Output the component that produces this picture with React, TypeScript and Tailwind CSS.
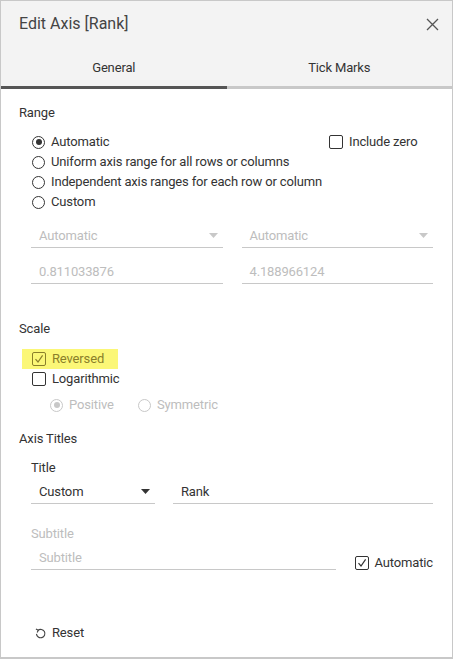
import React from 'react';

const Radio = ({ checked, disabled }: { checked?: boolean; disabled?: boolean }) => (
  <span
    className={`flex h-[13px] w-[13px] shrink-0 items-center justify-center rounded-full border ${
      disabled ? 'border-[#c8c8c8]' : 'border-[#333]'
    }`}
  >
    {checked && <span className={`h-[6px] w-[6px] rounded-full ${disabled ? 'bg-[#c8c8c8]' : 'bg-[#333]'}`} />}
  </span>
);

const Check = ({ checked, color = '#333' }: { checked?: boolean; color?: string }) => (
  <span
    className="flex h-[14px] w-[14px] shrink-0 items-center justify-center rounded-[2px] border"
    style={{ borderColor: color }}
  >
    {checked && (
      <svg width="10" height="10" viewBox="0 0 10 10" fill="none">
        <path d="M1.5 5.2 L4 8 L8.6 1.4" stroke={color} strokeWidth="1.2" />
      </svg>
    )}
  </span>
);

const Caret = ({ color }: { color: string }) => (
  <svg width="9" height="5" viewBox="0 0 9 5">
    <path d="M0 0 H9 L4.5 5 Z" fill={color} />
  </svg>
);

const Dropdown = ({ value, disabled, className }: { value: string; disabled?: boolean; className: string }) => (
  <div className={`flex h-[24px] items-center justify-between border-b border-[#c8c8c8] pl-[8px] pr-[5px] ${className}`}>
    <span className={disabled ? 'text-[#bdbdbd]' : 'text-[#333]'}>{value}</span>
    <Caret color={disabled ? '#c8c8c8' : '#333'} />
  </div>
);

const Field = ({ value, muted, className }: { value: string; muted?: boolean; className: string }) => (
  <div className={`flex h-[24px] items-center border-b border-[#c8c8c8] pl-[8px] ${className}`}>
    <span className={muted ? 'text-[#bdbdbd]' : 'text-[#333]'}>{value}</span>
  </div>
);

export default function App() {
  const radios = [
    'Automatic',
    'Uniform axis range for all rows or columns',
    'Independent axis ranges for each row or column',
    'Custom',
  ];

  return (
    <div
      className="flex h-[659px] w-[453px] flex-col overflow-hidden bg-white text-[13px] leading-[16px] tracking-[-0.15px] text-[#333]"
      style={{ fontFamily: 'Roboto, "Liberation Sans", sans-serif' }}
    >
      <div className="flex flex-1 flex-col border-x border-t border-[#c8c8c8] border-b-2">
        {/* Header */}
        <div className="bg-[#f3f3f3]">
          <div className="flex h-[46px] items-center justify-between pl-[18px] pr-[13px]">
            <span className="text-[16px] tracking-normal text-[#444]">Edit Axis [Rank]</span>
            <svg width="13" height="13" viewBox="0 0 13 13" fill="none">
              <path d="M1 1 L12 12 M12 1 L1 12" stroke="#555" strokeWidth="1.3" />
            </svg>
          </div>
          <div className="flex h-[39px]">
            <div className="flex flex-1 justify-center pt-[13px]">General</div>
            <div className="flex flex-1 justify-center pt-[13px]">Tick Marks</div>
          </div>
          <div className="flex h-[3px]">
            <div className="flex-1 bg-[#555]" />
            <div className="flex-1 bg-[#c8c8c8]" />
          </div>
        </div>

        {/* Body */}
        <div className="flex flex-1 flex-col pl-[18px] pr-[19px] pt-[16px]">
          <div>Range</div>
          <div className="mt-[11px] flex pl-[13px]">
            <div className="flex flex-1 flex-col">
              {radios.map((r, i) => (
                <div key={r} className="flex h-[20px] items-center gap-[6px]">
                  <Radio checked={i === 0} />
                  <span>{r}</span>
                </div>
              ))}
            </div>
            <div className="flex h-[20px] w-[104px] items-center gap-[6px]">
              <Check />
              <span>Include zero</span>
            </div>
          </div>

          <div className="mt-[12px] flex gap-[19px] pl-[12px]">
            <Dropdown value="Automatic" disabled className="flex-1" />
            <Dropdown value="Automatic" disabled className="flex-1" />
          </div>
          <div className="mt-[12px] flex gap-[19px] pl-[12px]">
            <Field value="0.811033876" muted className="flex-1" />
            <Field value="4.188966124" muted className="flex-1" />
          </div>

          <div className="mt-[37px]">Scale</div>
          <div className="ml-[3px] mt-[12px] flex h-[20px] w-[96px] items-center gap-[6px] bg-[#fbf777] pl-[10px] text-[#8a7f2a]">
            <Check checked color="#8a7f2a" />
            <span>Reversed</span>
          </div>
          <div className="flex h-[20px] items-center gap-[6px] pl-[13px]">
            <Check />
            <span>Logarithmic</span>
          </div>
          <div className="mt-[6px] flex h-[20px] items-center pl-[31px] text-[#bdbdbd]">
            <div className="flex w-[88px] items-center gap-[6px]">
              <Radio checked disabled />
              <span>Positive</span>
            </div>
            <div className="flex items-center gap-[6px]">
              <Radio disabled />
              <span>Symmetric</span>
            </div>
          </div>

          <div className="mt-[16px]">Axis Titles</div>
          <div className="mt-[13px] pl-[12px]">Title</div>
          <div className="mt-[4px] flex gap-[18px] pl-[12px]">
            <Dropdown value="Custom" className="w-[124px]" />
            <Field value="Rank" className="flex-1" />
          </div>

          <div className="mt-[22px] pl-[12px] text-[#bdbdbd]">Subtitle</div>
          <div className="mt-[4px] flex items-end gap-[19px] pl-[12px]">
            <Field value="Subtitle" muted className="w-[305px]" />
            <div className="-mb-[3px] flex h-[20px] items-center gap-[6px]">
              <Check checked />
              <span>Automatic</span>
            </div>
          </div>

          <div className="mt-[55px] flex h-[16px] items-center gap-[6px] pl-[16px]">
            <svg width="11" height="11" viewBox="0 0 12 12" fill="none">
              <path d="M3.2 2.6 A4.6 4.6 0 1 1 1.6 6.4" stroke="#444" strokeWidth="1.2" />
              <path d="M1 1.2 L3.6 2.4 L2.4 5" stroke="#444" strokeWidth="1.2" />
            </svg>
            <span>Reset</span>
          </div>
        </div>
      </div>
    </div>
  );
}
